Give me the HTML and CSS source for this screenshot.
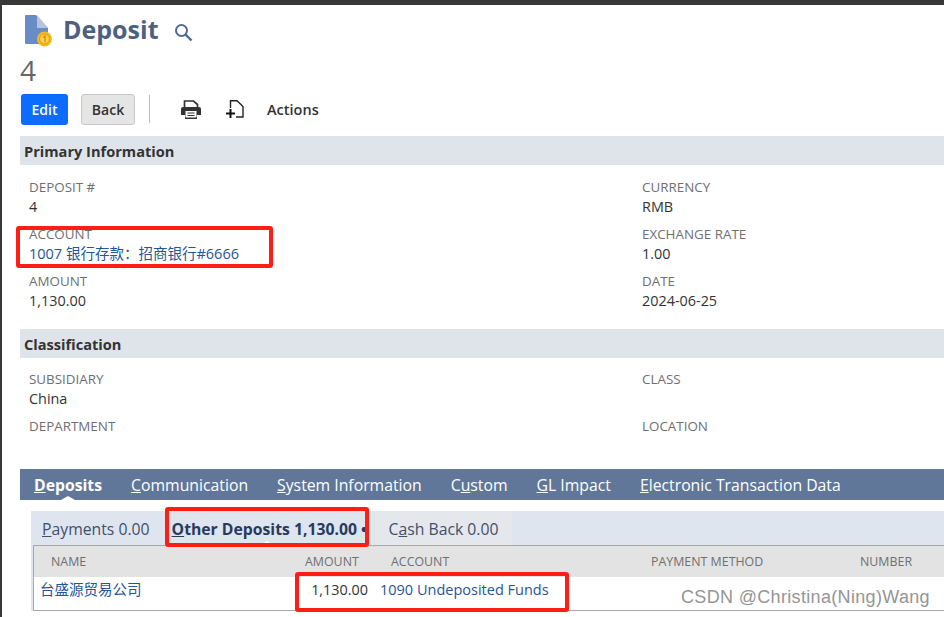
FILE: index.html
```html
<!DOCTYPE html>
<html lang="en">
<head>
<meta charset="utf-8">
<title>Deposit</title>
<link rel="stylesheet" href="styles.css">
</head>
<body>
<div class="topbar"></div>
<div class="frame">
  <header class="title-row">
    <svg class="doc-icon" width="30" height="34" viewBox="0 0 30 34">
      <path d="M1 2a1 1 0 0 1 1-1h10l12 13v16H2a1 1 0 0 1-1-1z" fill="#6a8bc5"/>
      <path d="M13 1l11 13H13z" fill="#b5c3de"/>
      <circle cx="20.500" cy="25" r="7.500" fill="#f6b91f"/>
      <circle cx="20.500" cy="25" r="5" fill="#fbd04a" stroke="#e49b12"/>
      <path d="M19 23.500l2-1.500v6.500" fill="none" stroke="#d98c0c" stroke-width="1.300"/>
    </svg>
    <h1 class="title">Deposit</h1>
    <svg class="search" width="19" height="19" viewBox="0 0 19 19">
      <circle cx="7.500" cy="7.500" r="5.500" fill="none" stroke="#4d6a94" stroke-width="2"/>
      <path d="M11.500 11.500l6 6" stroke="#4d6a94" stroke-width="2.400"/>
    </svg>
  </header>
  <div class="record">4</div>
  <div class="toolbar">
    <button class="btn primary">Edit</button>
    <button class="btn secondary">Back</button>
    <span class="sep"></span>
    <svg class="print" width="20" height="19" viewBox="0 0 20 19">
      <path d="M3.500 7V1h9l4 3.500V7" fill="none" stroke="#333" stroke-width="1.700"/>
      <path d="M2 7h16a2 2 0 0 1 2 2v6h-4v4H4v-4H0V9a2 2 0 0 1 2-2z" fill="#333"/>
      <rect x="4.500" y="11" width="11" height="6.500" fill="#fff"/>
      <path d="M6.500 13h7M6.500 15.500h7" stroke="#333" stroke-width="1.200"/>
    </svg>
    <svg class="newdoc" width="18" height="19" viewBox="0 0 18 19">
      <path d="M4.500 8V.8H11L17 6.500V17H10" fill="none" stroke="#222" stroke-width="1.400"/>
      <path d="M0 13.500h9M4.500 9v9" stroke="#111" stroke-width="2"/>
    </svg>
    <span class="actions">Actions</span>
  </div>

  <section class="band">Primary Information</section>
  <div class="fields primary-fields">
    <div class="col">
      <div class="field"><div class="label">DEPOSIT #</div><div class="value">4</div></div>
      <div class="field"><div class="label">ACCOUNT</div><div class="value"><a class="link">1007 银行存款：招商银行#6666</a></div></div>
      <div class="field"><div class="label">AMOUNT</div><div class="value">1,130.00</div></div>
    </div>
    <div class="col">
      <div class="field"><div class="label">CURRENCY</div><div class="value">RMB</div></div>
      <div class="field"><div class="label">EXCHANGE RATE</div><div class="value">1.00</div></div>
      <div class="field"><div class="label">DATE</div><div class="value">2024-06-25</div></div>
    </div>
  </div>

  <section class="band">Classification</section>
  <div class="fields class-fields">
    <div class="col">
      <div class="field"><div class="label">SUBSIDIARY</div><div class="value">China</div></div>
      <div class="field"><div class="label">DEPARTMENT</div><div class="value"></div></div>
    </div>
    <div class="col">
      <div class="field"><div class="label">CLASS</div><div class="value"></div></div>
      <div class="field"><div class="label">LOCATION</div><div class="value"></div></div>
    </div>
  </div>

  <nav class="tabs">
    <span class="tab active"><u>D</u>eposits</span>
    <span class="tab"><u>C</u>ommunication</span>
    <span class="tab"><u>S</u>ystem Information</span>
    <span class="tab">C<u>u</u>stom</span>
    <span class="tab"><u>G</u>L Impact</span>
    <span class="tab"><u>E</u>lectronic Transaction Data</span>
  </nav>

  <div class="panel">
    <div class="subtabs">
      <span class="subtab"><u>P</u>ayments 0.00</span>
      <span class="subtab current"><u>O</u>ther Deposits 1,130.00 •</span>
      <span class="subtab last">C<u>a</u>sh Back 0.00</span>
    </div>
    <div class="table">
      <div class="row head">
        <span class="c-name">NAME</span>
        <span class="c-amount">AMOUNT</span>
        <span class="c-account">ACCOUNT</span>
        <span class="c-method">PAYMENT METHOD</span>
        <span class="c-number">NUMBER</span>
      </div>
      <div class="row data">
        <a class="link c-name">台盛源贸易公司</a>
        <span class="c-amount">1,130.00</span>
        <a class="link c-account">1090 Undeposited Funds</a>
      </div>
    </div>
  </div>
</div>

<div class="mark mark-account"></div>
<div class="mark mark-tab"></div>
<div class="mark mark-row"></div>
<div class="watermark">CSDN @Christina(Ning)Wang</div>
</body>
</html>
```

FILE: styles.css
```css
* { box-sizing: border-box; }
html, body { margin: 0; height: 617px; overflow: hidden; }
body {
  position: relative;
  background: #fff;
  font-family: "Open Sans", "Noto Sans CJK SC", sans-serif;
  font-size: 14.4px;
  color: #333;
  display: flex;
  flex-direction: column;
}
.topbar { height: 5px; background: #383838; flex: none; }
.frame { flex: 1; margin-left: 2px; padding-left: 18px; box-shadow: -2px 0 0 #383838; overflow: hidden; }

.title-row { display: flex; align-items: center; height: 42px; padding-left: 4px; margin-top: 4px; }
.doc-icon { flex: none; margin-top: 1px; }
.title { margin: -2px 0 0 9px; font-size: 25px; line-height: 34px; font-weight: 700; color: #4d6080; }
.search { margin-left: 16px; margin-top: 4px; }
.record { font-size: 28px; line-height: 32px; color: #666; height: 30px; margin-top: 3px; }

.toolbar { display: flex; align-items: center; height: 32px; margin-top: 9px; padding-left: 1px; }
.btn { height: 31px; border-radius: 3px; font: 600 14px "Open Sans", sans-serif; padding: 0; }
.primary { width: 47px; background: #0b6cff; border: 0; color: #fff; }
.secondary { width: 54px; margin-left: 13px; background: #e5e5e5; border: 1px solid #c8c8c8; color: #333; }
.sep { width: 1px; height: 28px; margin-left: 14px; background: #bbb; }
.print { margin-left: 31px; }
.newdoc { margin-left: 25px; }
.actions { margin-left: 23px; font-weight: 600; font-size: 14.5px; color: #333; }

.band { height: 29px; line-height: 30px; margin-top: 11px; padding-left: 4px; background: #dfe4eb; font-weight: 700; font-size: 14.6px; }
.fields { display: grid; grid-template-columns: 613px 1fr; padding-left: 9px; }
.primary-fields { height: 164px; padding-top: 13px; }
.class-fields { height: 111px; padding-top: 12px; }
.primary-fields + .band { margin-top: 0; }
.field { height: 47px; }
.label { font-size: 13.4px; line-height: 18px; color: #6f6f6f; }
.value { font-size: 14.4px; line-height: 21px; color: #333; }
.link { color: #255599; text-decoration: none; font-size: 14.5px; }

.tabs { display: flex; gap: 29px; height: 31px; align-items: center; padding: 1px 0 0 14px; background: #607799; color: #fff; font-size: 15.78px; position: relative; }
.tab { line-height: 30px; position: relative; }
.tab.active { font-weight: 700; }
.tab.active::after { content: ""; position: absolute; left: 50%; bottom: 0; margin-left: -7px; border: 7px solid transparent; border-top: 0; border-bottom: 4px solid #fff; }

.panel { margin: 11px 0 0 11px; background: #dfe5ee; height: 100px; }
.subtabs { display: flex; height: 34px; }
.subtab { display: block; font-size: 15.75px; line-height: 36px; padding: 0 11px; color: #40506c; white-space: nowrap; }
.subtab.last { background: #e4e7ec; padding: 0 13px 0 20px; }
.subtab.current { font-weight: 700; color: #283a5e; position: relative; width: 208px; padding-right: 0; }
.subtab.current::after { content: ""; position: absolute; left: 99px; bottom: 0; border: 7px solid transparent; border-top: 0; border-bottom: 4px solid #fff; }
.table { margin-left: 2px; height: 66px; background: #fff; border: 1px solid #a8a8a8; border-right: 0; box-shadow: inset 0 0 0 1px #fff; }
.row { display: grid; grid-template-columns: 271px 63px 283px 209px 1fr; }
.head { height: 31px; background: #e3e3e3; font-size: 12.4px; color: #6f6f6f; line-height: 31px; }
.head .c-name { padding-left: 17px; }
.head .c-amount { text-align: right; padding-right: 11px; white-space: nowrap; }
.head .c-account { padding-left: 23px; }
.data { font-size: 14.4px; line-height: 26px; color: #333; }
.data .c-name { padding-left: 6px; }
.data .c-amount { text-align: right; white-space: nowrap; }
.data .c-account { padding-left: 12px; white-space: nowrap; grid-column: 3 / 6; }

.mark { position: absolute; border: 4px solid #ff1d14; border-radius: 3px; pointer-events: none; }
.mark-account { left: 16px; top: 226px; width: 257px; height: 42px; }
.mark-tab { left: 165px; top: 507px; width: 204px; height: 40px; }
.mark-row { left: 295px; top: 572px; width: 274px; height: 40px; }
.watermark { position: absolute; left: 681px; top: 587px; font: 18px "Liberation Sans", sans-serif; color: #959595; letter-spacing: .33px; white-space: nowrap; }
```
